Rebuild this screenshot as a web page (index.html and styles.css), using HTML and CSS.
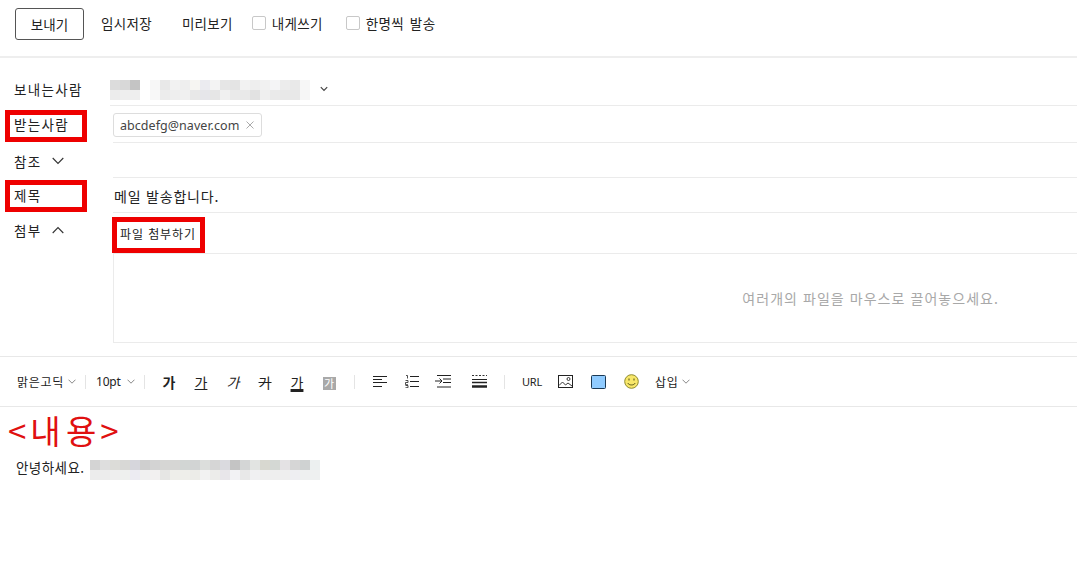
FILE: index.html
```html
<!DOCTYPE html>
<html lang="ko">
<head>
<meta charset="utf-8">
<title>메일 쓰기</title>
<link rel="stylesheet" href="styles.css">
</head>
<body>
<header class="actions">
  <button class="send">보내기</button>
  <span class="act act-save">임시저장</span>
  <span class="act act-preview">미리보기</span>
  <label class="check check-self"><i class="box"></i>내게쓰기</label>
  <label class="check check-each"><i class="box"></i>한명씩 발송</label>
</header>

<section class="form">
  <div class="row row-from">
    <div class="label">보내는사람</div>
    <div class="value value-from">
      <span class="mosaic mosaic-a"></span>
      <span class="mosaic mosaic-b"></span>
      <svg class="chev-s" viewBox="0 0 8 6" width="8" height="6"><path d="M.8 1.2 4 4.4l3.2-3.2" fill="none" stroke="#444" stroke-width="1.2"/></svg>
    </div>
  </div>
  <div class="row row-to">
    <div class="label">받는사람</div>
    <div class="value value-to">
      <span class="tag">abcdefg@naver.com<svg class="tag-x" viewBox="0 0 8 8" width="8" height="8"><path d="M.5.5l7 7M7.5.5l-7 7" stroke="#aaa" stroke-width="1" fill="none"/></svg></span>
    </div>
  </div>
  <div class="row row-cc">
    <div class="label">참조<svg class="chev-l" viewBox="0 0 12 8" width="12" height="8"><path d="M.7 1 6 6.5 11.300 1" fill="none" stroke="#333" stroke-width="1.100"/></svg></div>
    <div class="value"></div>
  </div>
  <div class="row row-subject">
    <div class="label">제목</div>
    <div class="value value-subject">메일 발송합니다.</div>
  </div>
  <div class="row row-attach">
    <div class="label">첨부<svg class="chev-l" viewBox="0 0 12 8" width="12" height="8"><path d="M.7 7 6 1.500 11.300 7" fill="none" stroke="#333" stroke-width="1.100"/></svg></div>
    <div class="attach">
      <div class="attach-btn"><span>파일 첨부하기</span></div>
      <div class="drop">여러개의 파일을 마우스로 끌어놓으세요.</div>
    </div>
  </div>
</section>

<nav class="tools">
  <span class="t-font">맑은고딕</span>
  <svg class="chev-t" viewBox="0 0 8 5" width="8" height="5"><path d="M.5.7 4 4.200 7.500.7" fill="none" stroke="#888" stroke-width="1"/></svg>
  <i class="sep sep-1"></i>
  <span class="t-size">10pt</span>
  <svg class="chev-t" viewBox="0 0 8 5" width="8" height="5"><path d="M.5.7 4 4.200 7.500.7" fill="none" stroke="#888" stroke-width="1"/></svg>
  <i class="sep sep-2"></i>
  <span class="ga ga-b">가</span>
  <span class="ga ga-u">가</span>
  <span class="ga ga-i">가</span>
  <span class="ga ga-s">가</span>
  <span class="ga ga-c">가</span>
  <span class="ga"><span class="ga-bg">가</span></span>
  <i class="sep sep-3"></i>
  <svg class="ic ic-1" viewBox="0 0 14 13" width="14" height="13"><path d="M0 1.500h14M0 4.500h9M0 7.500h14M0 11.500h9" stroke="#222" stroke-width="1" fill="none"/></svg>
  <svg class="ic ic-2" viewBox="0 0 14 13" width="14" height="13"><path d="M5 1.500h9M5 6.500h9M5 11.500h9" stroke="#222" stroke-width="1" fill="none"/><path d="M1 .5h1.500v3M.5 5.500h2.500v2H.5v2.200h2.500M.5 10.500h2.500v2.200H.5" stroke="#222" stroke-width=".8" fill="none"/></svg>
  <svg class="ic ic-3" viewBox="0 0 16 13" width="16" height="13"><path d="M2 .5h14M8 4h8M8 7.500h8M2 12h14" stroke="#222" stroke-width="1" fill="none"/><path d="M0 6h6.500M4.500 3.500 7 6 4.500 8.500" stroke="#222" stroke-width="1" fill="none"/></svg>
  <svg class="ic ic-4" viewBox="0 0 15 13" width="15" height="13"><path d="M0 .5h15" stroke="#333" stroke-width="1" stroke-dasharray="2 1.500" fill="none"/><path d="M0 4.500h15" stroke="#222" stroke-width="1" fill="none"/><path d="M0 7.500h15" stroke="#222" stroke-width="1.500" fill="none"/><path d="M0 11.500h15" stroke="#222" stroke-width="2.500" fill="none"/></svg>
  <i class="sep sep-4"></i>
  <span class="t-url">URL</span>
  <svg class="ic ic-img" viewBox="0 0 15 13" width="15" height="13"><rect x=".5" y=".5" width="14" height="12" fill="#fff" stroke="#222"/><circle cx="10.500" cy="4" r="1.500" fill="none" stroke="#222" stroke-width=".9"/><path d="M1 10.500 4.500 7l3 3 2.500-2 4 3" fill="none" stroke="#222" stroke-width=".9"/></svg>
  <svg class="ic ic-color" viewBox="0 0 15 14" width="15" height="14"><rect x=".5" y=".5" width="14" height="13" rx="1" fill="#8fcbff" stroke="#1c3a55"/></svg>
  <svg class="ic ic-smile" viewBox="0 0 15 15" width="15" height="15"><circle cx="7.500" cy="7.500" r="6.800" fill="#f8e76a" stroke="#8f8a2c" stroke-width="1"/><path d="M5 4.500v2M10 4.500v2" stroke="#5a5a1c" stroke-width="1.100"/><path d="M3.800 9c1 2.600 6.400 2.600 7.400 0" fill="none" stroke="#5a5a1c" stroke-width="1"/></svg>
  <span class="t-insert">삽입</span>
  <svg class="chev-t chev-ins" viewBox="0 0 8 5" width="8" height="5"><path d="M.5.7 4 4.200 7.500.7" fill="none" stroke="#888" stroke-width="1"/></svg>
</nav>

<main class="content">
  <p class="greet">안녕하세요.<span class="mosaic mosaic-c"></span></p>
</main>

<div class="mark mark-to"></div>
<div class="mark mark-subject"></div>
<div class="mark mark-file"></div>
<div class="note">&lt;내 용&gt;</div>
</body>
</html>
```
FILE: styles.css
```css
* { box-sizing: border-box; }
html, body { margin: 0; padding: 0; }
body {
  width: 1077px;
  height: 563px;
  overflow: hidden;
  background: #fff;
  position: relative;
  color: #222;
  font-family: "Noto Sans CJK KR", "Noto Sans", sans-serif;
  font-size: 13px;
}

/* top action bar */
.actions {
  height: 58px;
  border-bottom: 2px solid #eeeeee;
  padding: 8px 0 0 15px;
  display: flex;
  align-items: flex-start;
  font-size: 13.500px;
  letter-spacing: .3px;
}
.send {
  width: 69px;
  height: 32px;
  border: 1px solid #555;
  border-radius: 3px;
  background: #fff;
  color: #222;
  font: inherit;
  padding: 0;
  margin-right: 17px;
}
.act { line-height: 30px; }
.act-save { margin-right: 30px; }
.act-preview { margin-right: 19px; }
.check { display: flex; align-items: center; height: 30px; }
.check-self { margin-right: 23px; }
.check-each { word-spacing: 1.500px; letter-spacing: .4px; }
.box {
  width: 14px;
  height: 14px;
  border: 1px solid #c8c8c8;
  border-radius: 2px;
  margin-right: 6px;
}

/* address form */
.form { display: flex; flex-direction: column; }
.row { display: flex; }
.label {
  width: 113px;
  flex: none;
  padding-left: 14px;
  font-size: 13.500px;
  letter-spacing: 1.300px;
  display: flex;
  align-items: center;
  height: 100%;
}
.chev-l { margin-left: 11px; }
.value { flex: 1; border-bottom: 1px solid #ebebeb; }
.row-from { height: 48px; }
.row-to { height: 37px; }
.row-cc { height: 35px; }
.row-subject { height: 35px; }
.row-attach { height: 130px; }
.row-from .label { padding-top: 14px; height: 48px; }
.row-to .label { padding-bottom: 1px; }
.row-cc .label { padding-top: 0; }
.row-subject .label { padding-top: 0; height: 33px; }
.row-attach .label { height: 34px; }
.value-from {
  margin-left: -3px;
  display: flex;
  align-items: flex-start;
  padding-top: 22px;
  border-bottom-color: #ebebeb;
}
.mosaic { display: block; background-repeat: no-repeat; background-size: 100% 10px; }
.mosaic-a {
  width: 30px;
  height: 20px;
  margin-right: 10px;
  background-image:
    linear-gradient(90deg, #dcdcdc 0 10px, #d8d8d8 10px 20px, #c4c4c4 20px 30px),
    linear-gradient(90deg, #ececec 0 10px, #eeeeee 10px 30px);
  background-position: top, bottom;
}
.mosaic-b {
  width: 160px;
  height: 20px;
  background-image:
    linear-gradient(90deg, #f7f7f7 0 10px, #e8e8e8 10px 20px, #f2f2f2 20px 30px, #eeeeee 30px 40px, #f6f5f2 40px 50px, #ebebf0 50px 60px, #f3f3f3 60px 70px, #e6e6e6 70px 80px, #e4e4e4 80px 90px, #f2f2f2 90px 100px, #eeeeee 100px 110px, #f1f1f1 110px 120px, #f4f4f6 120px 130px, #ececec 130px 140px, #e9e9e9 140px 150px, #f7f7f7 150px 160px),
    linear-gradient(90deg, #f8f8f8 0 10px, #ececec 10px 20px, #eeeeee 20px 30px, #f0f0f0 30px 40px, #e8e8e8 40px 50px, #e6e6ea 50px 60px, #e6e6e6 60px 70px, #f0f0f0 70px 80px, #eaeaea 80px 90px, #e9e9e9 90px 100px, #e2e2e2 100px 110px, #efefef 110px 120px, #eaeaea 120px 130px, #e8e8e8 130px 150px, #f6f6f6 150px 160px);
  background-position: top, bottom;
}
.mosaic-c {
  width: 230px;
  height: 20px;
  background-image:
    linear-gradient(90deg, #d4d4d4 0 10px, #dedede 10px 20px, #dcdcd8 20px 30px, #d8d8d6 30px 40px, #d6d6dc 40px 50px, #cfcfcf 50px 60px, #d3d3d3 60px 70px, #d6d6d4 70px 90px, #d2d6d4 90px 100px, #d2d4d4 100px 110px, #dcdedc 110px 120px, #d6d6d6 120px 130px, #dadadf 130px 140px, #c4c4c4 140px 150px, #d4d6d6 150px 160px, #e2e4e2 160px 170px, #d8d8d0 170px 180px, #d4d8d4 180px 190px, #e4e2e4 190px 200px, #d6d6d6 200px 210px, #cfd2d2 210px 220px, #ecf0f0 220px 230px),
    linear-gradient(90deg, #ececec 0 20px, #eeeeee 20px 30px, #eef0ee 30px 40px, #ecebf2 40px 50px, #f0f0f0 50px 60px, #f2f0f0 60px 70px, #e6e6e4 70px 80px, #eeeeea 80px 100px, #ecece8 100px 110px, #f2f2f2 110px 120px, #ececea 120px 130px, #e8e6ea 130px 140px, #f2f2f4 140px 150px, #e8e8e8 150px 160px, #f0f0f2 160px 170px, #eeeeee 170px 200px, #eeeef2 200px 210px, #eef0f0 210px 230px);
  background-position: top, bottom;
}
.chev-s { margin: 6px 0 0 10px; }

.value-to { padding-top: 7px; }
.tag {
  display: inline-flex;
  align-items: center;
  width: 149px;
  height: 24px;
  padding-left: 6px;
  border: 1px solid #dddddd;
  border-radius: 3px;
  font-family: "Noto Sans", sans-serif;
  font-size: 12.500px;
  letter-spacing: .05px;
  color: #444;
  white-space: nowrap;
}
.tag-x { margin-left: 7px; }
.value-subject {
  font-size: 14px;
  letter-spacing: .8px;
  padding: 8px 0 0 1px;
  line-height: 20px;
}

.attach { flex: 1; display: flex; flex-direction: column; }
.attach-btn {
  height: 41px;
  border-bottom: 1px solid #ebebeb;
  padding: 11px 0 0 7px;
  font-size: 12px;
  line-height: 20px;
  letter-spacing: .9px;
}
.drop {
  flex: 1;
  border-left: 1px solid #ebebeb;
  border-bottom: 1px solid #ebebeb;
  display: flex;
  align-items: center;
  justify-content: flex-end;
  padding: 0 78px 0 0;
  color: #a8a8a8;
  font-size: 14px;
  letter-spacing: 1.050px;
}

/* editor toolbar */
.tools {
  margin-top: 13px;
  height: 51px;
  border-top: 1px solid #e8e8e8;
  border-bottom: 1px solid #e8e8e8;
  padding: 0 0 0 17px;
  display: flex;
  align-items: center;
  font-size: 12px;
}
.t-font { letter-spacing: .7px; width: 46px; white-space: nowrap; }
.chev-t { margin-left: 5px; flex: none; }
.sep { width: 1px; height: 14px; background: #e4e4e4; flex: none; }
.sep-1 { margin: 0 10px 0 9px; }
.sep-2 { margin: 0 8px 0 9px; }
.sep-3 { margin: 0 18px 0 9px; }
.sep-4 { margin: 0 17px 0 17px; }
.t-size { width: 26px; font-family: "Noto Sans", sans-serif; letter-spacing: -.2px; font-size: 12px; }
.ga {
  width: 32px;
  flex: none;
  text-align: center;
  font-size: 14px;
  line-height: 16px;
}
.ga-b { font-weight: 700; }
.ga-u { text-decoration: underline; }
.ga-i { font-style: italic; }
.ga-s { text-decoration: line-through; }
.ga-c { text-decoration: underline; text-decoration-thickness: 3px; text-underline-offset: 1px; }
.ga-bg {
  display: inline-block;
  width: 13px;
  height: 13px;
  background: #a9a9a9;
  color: #fff;
  font-size: 11px;
  line-height: 13px;
}
.ic { flex: none; }
.ic-1 { margin-right: 18px; }
.ic-2 { margin-right: 16px; }
.ic-3 { margin-right: 21px; }
.t-url { font-family: "Noto Sans", sans-serif; font-size: 11px; width: 20px; margin-right: 16px; letter-spacing: -.2px; }
.ic-img { margin-right: 18px; }
.ic-color { margin-right: 18px; }
.ic-smile { margin-right: 16px; }
.t-insert { width: 24px; white-space: nowrap; letter-spacing: .7px; }
.chev-ins { margin-left: 3px; }

/* message body */
.content { padding: 53px 0 0 16px; }
.greet {
  margin: 0;
  display: flex;
  align-items: flex-start;
  font-size: 13.500px;
  line-height: 15px;
  letter-spacing: .45px;
  gap: 5px;
}

/* red annotations drawn over the screenshot */
.mark { position: absolute; border: 5px solid #ee0000; }
.mark-to { left: 5px; top: 110px; width: 82px; height: 32px; }
.mark-subject { left: 5px; top: 180px; width: 82px; height: 32px; }
.mark-file { left: 112px; top: 217px; width: 93px; height: 36px; }
.note {
  position: absolute;
  left: 8px;
  top: 407px;
  color: #e01010;
  font-size: 33px;
  line-height: 46px;
  letter-spacing: 4px;
  word-spacing: -12px;
  white-space: nowrap;
}
```
